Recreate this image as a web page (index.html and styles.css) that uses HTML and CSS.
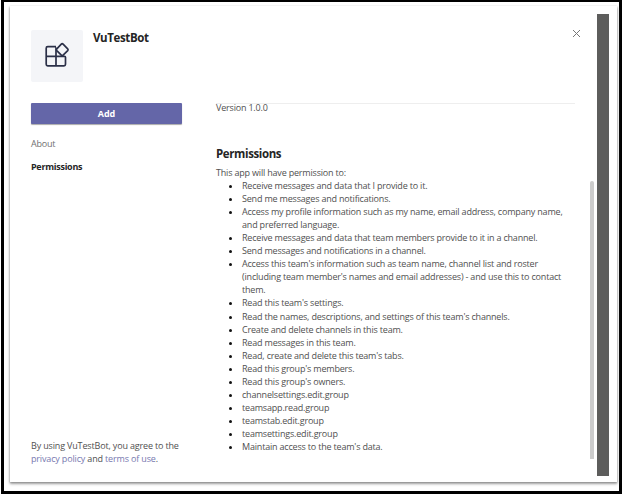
FILE: index.html
```
<!DOCTYPE html>
<html lang="en">
<head>
<meta charset="utf-8">
<title>VuTestBot</title>
<link rel="stylesheet" href="styles.css">
</head>
<body>
<div class="frame">
  <main class="dialog">
    <aside class="sidebar">
      <header class="app">
        <div class="app-icon">
          <svg width="28" height="28" viewBox="0 0 28 28" fill="none" stroke="#2b3048" stroke-width="1.7" stroke-linejoin="round">
            <path d="M13 4.700H4.700Q3.200 4.700 3.200 6.200V22.300Q3.200 23.800 4.700 23.800H21Q22.500 23.800 22.500 22.300V15.300Q22.500 14.300 21.500 14.300H3.200M13 23.800V5.500"/>
            <path d="M18.300 2.200Q19.200 1.300 20.100 2.200L24.700 6.800Q25.500 7.700 24.700 8.600L20.100 13.100Q19.200 14 18.300 13.100L13.800 8.600Q13 7.700 13.800 6.800Z"/>
          </svg>
        </div>
        <h1 class="app-name">VuTestBot</h1>
      </header>
      <button class="add">Add</button>
      <nav class="nav">
        <a class="nav-item">About</a>
        <a class="nav-item active">Permissions</a>
      </nav>
      <p class="terms">By using VuTestBot, you agree to the<br><a>privacy policy</a> and <a>terms of use</a>.</p>
    </aside>
    <section class="content">
      <div class="close-row">
        <svg width="9" height="9" viewBox="0 0 9 9" stroke="#777" stroke-width="1"><path d="M1 1L8 8M8 1L1 8"/></svg>
      </div>
      <p class="version">Version 1.0.0</p>
      <h2 class="title">Permissions</h2>
      <p class="intro">This app will have permission to:</p>
      <ul class="list">
        <li>Receive messages and data that I provide to it.</li>
        <li>Send me messages and notifications.</li>
        <li>Access my profile information such as my name, email address, company name,<br>and preferred language.</li>
        <li>Receive messages and data that team members provide to it in a channel.</li>
        <li>Send messages and notifications in a channel.</li>
        <li>Access this team's information such as team name, channel list and roster<br>(including team member's names and email addresses) - and use this to contact<br>them.</li>
        <li>Read this team's settings.</li>
        <li>Read the names, descriptions, and settings of this team's channels.</li>
        <li>Create and delete channels in this team.</li>
        <li>Read messages in this team.</li>
        <li>Read, create and delete this team's tabs.</li>
        <li>Read this group's members.</li>
        <li>Read this group's owners.</li>
        <li>channelsettings.edit.group</li>
        <li>teamsapp.read.group</li>
        <li>teamstab.edit.group</li>
        <li>teamsettings.edit.group</li>
        <li>Maintain access to the team's data.</li>
      </ul>
    </section>
    <div class="scroll"></div>
    <div class="backdrop"></div>
  </main>
</div>
</body>
</html>
```

FILE: styles.css
```
* { box-sizing: border-box; }
body {
  margin: 0;
  background: #fff;
  color: #505050;
  font: 9px/13.05px "Open Sans", "Noto Sans", sans-serif;
  letter-spacing: -0.19px;
  overflow: hidden;
}
h1, h2, p, ul { margin: 0; padding: 0; }
.frame {
  width: 621px;
  height: 494px;
  margin-left: 1px;
  border: 3px solid #000;
  border-top-width: 2px;
  padding: 4px 2px 8px 6px;
}
.dialog {
  display: flex;
  height: 476px;
  background: #fff;
  box-shadow: 0 1px 2px #888, 0 2px 3px #bbb;
}
.sidebar {
  display: flex;
  flex-direction: column;
  width: 206px;
  padding: 24px 34px 17px 21px;
}
.app { display: flex; gap: 10px; }
.app-icon {
  display: flex;
  align-items: center;
  justify-content: center;
  width: 52px;
  height: 52px;
  border-radius: 2px;
  background: #f4f5f8;
}
.app-name { font-size: 11.5px; line-height: 16px; letter-spacing: -0.38px; color: #252525; }
.add {
  width: 151px;
  height: 21px;
  margin-top: 21px;
  padding: 0;
  border: 0;
  border-radius: 1px;
  background: #6466a8;
  box-shadow: 0 1px 1px #aaa;
  color: #fff;
  font: bold 9px/21px "Open Sans", sans-serif;
}
.nav { display: flex; flex-direction: column; gap: 10px; margin-top: 13px; color: #707070; }
.active { color: #252525; font-weight: 700; letter-spacing: -0.28px; }
.terms { margin-top: auto; white-space: nowrap; letter-spacing: -0.16px; }
.terms a { color: #7779b0; }
.content { width: 359px; white-space: nowrap; }
.close-row { display: flex; justify-content: flex-end; height: 97px; padding: 23px 0 0; }
.close-row svg { margin-right: -6px; }
.version { height: 43px; border-top: 1px solid #eee; line-height: 7px; }
.title { color: #252525; font-size: 11.5px; line-height: 16px; letter-spacing: -0.38px; }
.intro { margin-top: 4px; }
.list { padding-left: 26px; }
.list li::marker { color: #111; }
.scroll { width: 4px; height: 278px; margin: 175px 3px 0 15px; border-radius: 2px 2px 0 0; background: #ccc; }
.backdrop { width: 12px; height: 462px; margin-top: 8px; background: #5d5d5c; }
```
